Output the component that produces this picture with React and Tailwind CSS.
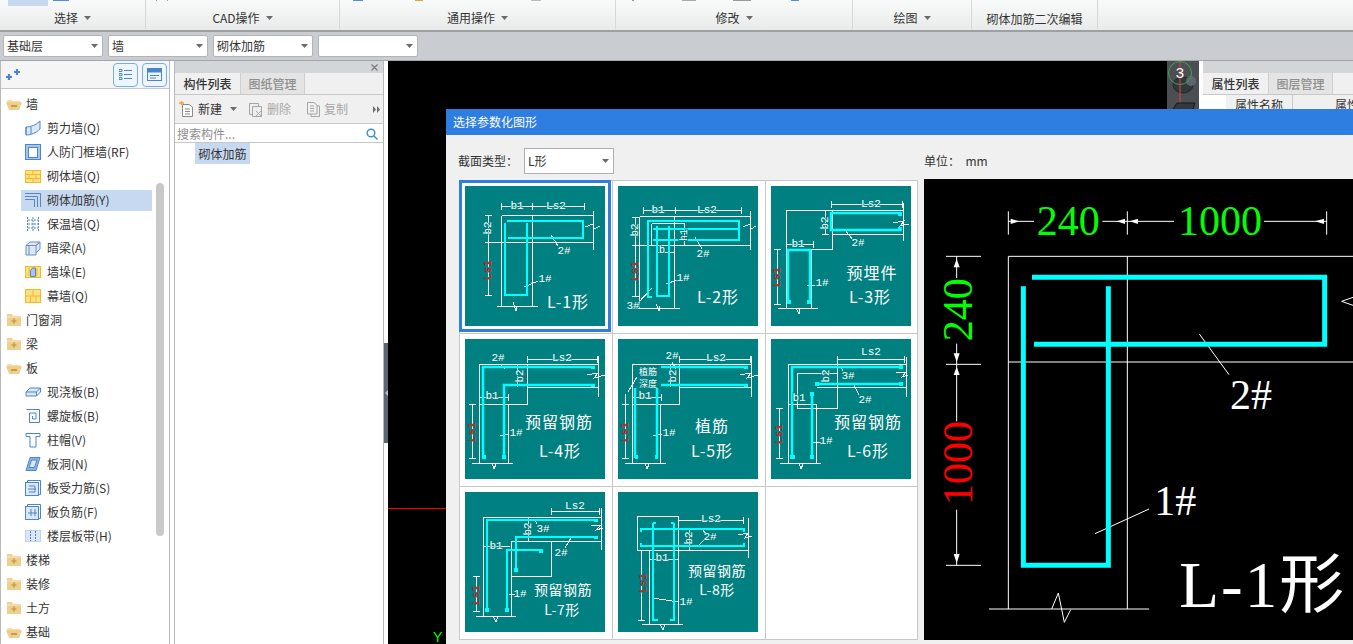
import React from "react";

const B = "#4a86d0";
const Y = "#f5b921";

function Ic({ children }) {
  return (
    <svg width="16" height="16" viewBox="0 0 16 16" fill="none" stroke={B} strokeWidth="1" className="shrink-0">
      {children}
    </svg>
  );
}

const icons = {
  shear: <Ic><path d="M1 7C6 7 11 5 15 1V9C11 13 6 15 1 15Z" fill="#dce8f7" /><path d="M1 7V15M6 7V14" /></Ic>,
  frame: <Ic><rect x="0.5" y="0.5" width="15" height="15" fill="#a9c6ea" /><rect x="3.5" y="3.5" width="9" height="10" fill="#fff" /></Ic>,
  brick: <Ic><rect x="0.5" y="2.5" width="15" height="12" fill="#fde08a" stroke={Y} /><path d="M1 6.5H15M1 10.5H15M8 3V6M4 7V10M11 7V10M8 11V14" stroke={Y} /></Ic>,
  rein: <Ic><path d="M0 1.5H15.5V15M0 4.5H12.5V15M0 7.5H9.5V15" stroke="#5b86bd" /></Ic>,
  insul: <Ic><path d="M2.5 1V15M8 1V15M13.5 1V15M3 4H13M3 8H13M3 12H13" strokeDasharray="2 1" /></Ic>,
  beam: <Ic><path d="M1 5.5L5 2H15L11 5.5ZM1 5.5H11V15H1ZM11 5.5L15 2V9L11 13" fill="#dce8f7" stroke="#6d8fb8" /><path d="M4 6V15" stroke="#6d8fb8" /></Ic>,
  pier: <Ic><rect x="0.5" y="2.5" width="15" height="11" fill="#fde08a" stroke={Y} /><path d="M4 4V12M12 4V12" stroke={Y} /><path d="M5.5 6.5L7.5 4H10.5V12.5H5.5Z" fill="#a9c6ea" /></Ic>,
  curtain: <Ic><rect x="0.5" y="1.5" width="15" height="13" fill="#fde08a" stroke={Y} /><path d="M8 2V8M1 8H15M5.5 8V14M11 8V14" stroke={Y} strokeWidth="1" /></Ic>,
  slab: <Ic><path d="M1 8L5 4H15.5L11.5 8V12H1ZM11.5 8H1M11.5 12L15.5 8V4" fill="#dce8f7" /></Ic>,
  spiral: <Ic><path d="M1.5 1.5H14.5V14.5H4.5V5H11V11H7.5V8" /></Ic>,
  cap: <Ic><path d="M1 1.5H15V4.5H11V15H5V4.5H1Z" /></Ic>,
  hole: <Ic strokeWidth="1"><path d="M5 1.5H15L11 14.5H1Z" fill="#8eb3e2" /><path d="M6.5 4H12L9.5 11.5H4Z" fill="#dce8f7" /></Ic>,
  main: <Ic><rect x="0.5" y="2.5" width="13" height="13" fill="#dce8f7" /><path d="M14 14.5H15.5V0.5H2.5V2M4 6H10V12H4M3 9H11" /></Ic>,
  neg: <Ic><rect x="0.5" y="2.5" width="13" height="13" fill="#dce8f7" /><path d="M14 14.5H15.5V0.5H2.5V2M6 5V12M10 5V12M3 9H12" /></Ic>,
  strip: <Ic><rect x="0.5" y="2.5" width="15" height="11" fill="#dce8f7" stroke="#bcd4ef" /><path d="M5.5 3V13M10.5 3V13" strokeDasharray="2 1" /></Ic>,
};

function Folder({ open }) {
  return (
    <svg width="16" height="16" viewBox="0 0 16 16" className="shrink-0">
      {open ? (
        <>
          <path d="M1 4H6L7 5H14V13H3Z" fill="#f5dca8" />
          <path d="M0 6H16L13 14H3Z" fill="#efcf8d" />
          <rect x="5" y="9" width="6" height="2" fill="#c89c4c" />
        </>
      ) : (
        <>
          <path d="M1 2H6L7 4H15V14H1Z" fill="#efcf8d" />
          <path d="M1 5H15" stroke="#f8e7c2" />
          <path d="M8 6.5V11.5M5.5 9H10.5" stroke="#c89c4c" strokeWidth="1.6" />
        </>
      )}
    </svg>
  );
}

const tree = [
  ["g", "墙", true],
  ["l", "剪力墙(Q)", "shear"],
  ["l", "人防门框墙(RF)", "frame"],
  ["l", "砌体墙(Q)", "brick"],
  ["s", "砌体加筋(Y)", "rein"],
  ["l", "保温墙(Q)", "insul"],
  ["l", "暗梁(A)", "beam"],
  ["l", "墙垛(E)", "pier"],
  ["l", "幕墙(Q)", "curtain"],
  ["g", "门窗洞", false],
  ["g", "梁", false],
  ["g", "板", true],
  ["l", "现浇板(B)", "slab"],
  ["l", "螺旋板(B)", "spiral"],
  ["l", "柱帽(V)", "cap"],
  ["l", "板洞(N)", "hole"],
  ["l", "板受力筋(S)", "main"],
  ["l", "板负筋(F)", "neg"],
  ["l", "楼层板带(H)", "strip"],
  ["g", "楼梯", false],
  ["g", "装修", false],
  ["g", "土方", false],
  ["g", "基础", true],
];

function Caret({ className = "" }) {
  return (
    <svg width="7" height="4" viewBox="0 0 7 4" className={"shrink-0 " + className}>
      <path d="M0 0H7L3.5 4Z" fill="#6b6b6b" />
    </svg>
  );
}

function RibbonGroup({ w, label, caret = true, blips = [], pad = "" }) {
  return (
    <div className="h-[29px] flex flex-col border-r border-[#d5d8da] shrink-0" style={{ width: w }}>
      <div className="h-[6px] flex items-start">
        {blips.map((b, i) => (
          <span key={i} className="shrink-0" style={{ marginLeft: b[0], width: b[1], background: b[2], height: b[3] || 1 }} />
        ))}
      </div>
      <div className={"flex-1 flex items-center justify-center gap-[6px] text-[12px] text-[#333] " + pad}>
        <span>{label}</span>
        {caret && <Caret />}
      </div>
    </div>
  );
}

function Combo({ label }) {
  return (
    <div className="w-[100px] h-[22px] bg-white border border-[#b4b4b4] rounded-[2px] flex items-center justify-between pl-[3px] pr-[4px] text-[12px] text-[#333]">
      <span>{label}</span>
      <Caret />
    </div>
  );
}

/* ---- 参数化缩略图 ---- */
function TL({ x, y, t, c = "#fff", r, s = 11, cjk, ls = 0 }) {
  return (
    <text
      x={x}
      y={y}
      fill={c}
      fontSize={s}
      letterSpacing={ls}
      textAnchor="middle"
      dominantBaseline="central"
      stroke="#008080"
      strokeWidth={cjk ? 0 : 1.5}
      paintOrder="stroke"
      className={cjk ? "font-['Noto_Sans_CJK_SC',sans-serif]" : "font-['Liberation_Mono','Noto_Sans_CJK_SC',monospace]"}
      transform={r ? `rotate(-90 ${x} ${y})` : undefined}
    >
      {t}
    </text>
  );
}

function Thumb({ white, cyan, thick = "", w = 2, texts }) {
  return (
    <svg width="140" height="140" viewBox="0 0 140 140" className="block bg-[#008080]">
      <path d={white} fill="none" stroke="#fff" strokeWidth="1" shapeRendering="crispEdges" />
      <path d={cyan} fill="none" stroke="#00ffff" strokeWidth={w} />
      {thick && <path d={thick} fill="none" stroke="#00ffff" strokeWidth="4" />}
      {texts.map((t, i) => (
        <TL key={i} {...t} />
      ))}
    </svg>
  );
}

const thumbs = [
  {
    white:
      "M36.5 20.5H119.5M36.5 17V24M67.5 17V24M119.5 17V24M36.5 29.5H128.5M36.5 29.5V120M67.5 29.5V120M22 56.5H128.5M128.5 25V64M32 120.5H73M48 116L51 125L52 120M23.5 29V109M20 29.5H27M20 56.5H27M20 109.5H27M120 41L128 38L129 43L135 40M59 101L73 95M86 49L93 60",
    cyan: "M40 37V109H62V37M42 35H118V52H43",
    texts: [
      { x: 52, y: 20, t: "b1" },
      { x: 91, y: 20, t: "Ls2" },
      { x: 23, y: 42, t: "b2", r: 1 },
      { x: 23, y: 84, t: "Ls1", r: 1, c: "#ff0000" },
      { x: 80, y: 93, t: "1#" },
      { x: 99, y: 65, t: "2#" },
      { x: 103, y: 115, t: "L-1形", s: 16, cjk: 1, ls: 1 },
    ],
  },
  {
    white:
      "M25.5 24.5H123.5M25.5 21V28M57.5 21V28M123.5 21V28M21.5 30.5H132.5M14 59.5H132.5M132.5 25V64M21.5 30.5V122M56.5 30V122M10 122.5H62M17.5 31V110M14 31.5H21M14 59.5H21M14 110.5H21M33.5 37.5V60M33.5 37.5H66M66.5 37V60M38 66.5H56M38.5 63V70M125 41L132 38L133 43L138 40M38 118L41 125L42 120M20 117L34 102M48 98L59 94M77 51L84 63",
    cyan: "M34 111H30V35H121V54H35M39 40V110H51V40M35 43H121",
    texts: [
      { x: 40, y: 24, t: "b1" },
      { x: 89, y: 24, t: "Ls2" },
      { x: 17, y: 44, t: "b2", r: 1 },
      { x: 17, y: 85, t: "Ls1", r: 1, c: "#ff0000" },
      { x: 66, y: 49, t: "h1", r: 1, s: 10 },
      { x: 44, y: 64, t: "b", s: 10 },
      { x: 65, y: 92, t: "1#" },
      { x: 85, y: 68, t: "2#" },
      { x: 15, y: 120, t: "3#" },
      { x: 100, y: 110, t: "L-2形", s: 16, cjk: 1, ls: 1 },
    ],
  },
  {
    white:
      "M60.5 18.5H131.5M60.5 15V22M131.5 15V22M15.5 24.5H131.5M15.5 24V122M61.5 24V63M15.5 63.5H61.5M40.5 63V122M61 48.5H132.5M132.5 17V55M7 122.5H47M15.5 58.5H42M42.5 55V62M54.5 24V48M51 24.5H58M51 48.5H58M6.5 63V118M3 63.5H10M3 118.5H10M122 37L133 35L129 40L138 38M25 122L28 128L29 123M36 99H44M74 44L82 54",
    cyan: "M17 117V64H39V117M130 27H60V44H130",
    w: 2.5,
    thick: "M16 116H20M40 116H36M129 26V30M129 45V41",
    texts: [
      { x: 100, y: 18, t: "Ls2" },
      { x: 27, y: 58, t: "b1" },
      { x: 54, y: 37, t: "b2", r: 1 },
      { x: 6, y: 91, t: "Ls1", r: 1, c: "#ff0000" },
      { x: 51, y: 97, t: "1#" },
      { x: 87, y: 57, t: "2#" },
      { x: 101, y: 86, t: "预埋件", s: 16, cjk: 1, ls: 1 },
      { x: 99, y: 110, t: "L-3形", s: 16, cjk: 1, ls: 1 },
    ],
  },
  {
    white:
      "M62.5 20.5H132.5M62.5 17V24M132.5 17V24M14.5 25.5H133.5M14.5 25V124M62.5 25V65M14.5 65.5H62.5M43.5 65V124M62 48.5H133.5M133.5 17V58M7 124.5H48M14.5 58.5H43M43.5 55V62M7.5 65V119M4 65.5H11M4 119.5H11M52 25V48M122 36L133 34L129 39L140 36M27 124L29 130L31 125M35 97L44 95M36 26L40 30",
    cyan: "M18 119V28H130M39 119V46H130",
    w: 2.5,
    thick: "M17 118H21M37 118H41M128 27V30M128 45V48",
    texts: [
      { x: 97, y: 19, t: "Ls2" },
      { x: 33, y: 19, t: "2#" },
      { x: 27, y: 57, t: "b1" },
      { x: 55, y: 37, t: "b2", r: 1 },
      { x: 7, y: 93, t: "Ls1", r: 1, c: "#ff0000" },
      { x: 51, y: 94, t: "1#" },
      { x: 94, y: 82, t: "预留钢筋", s: 16, cjk: 1, ls: 1 },
      { x: 95, y: 111, t: "L-4形", s: 16, cjk: 1, ls: 1 },
    ],
  },
  {
    white:
      "M61.5 20.5H132.5M61.5 17V24M132.5 17V24M14.5 25.5H133.5M14.5 25V124M61.5 25V65M14.5 65.5H61.5M42.5 65V124M61 48.5H133.5M133.5 17V58M7 124.5H48M14.5 58.5H43M43.5 55V62M7.5 55V119M4 65.5H11M4 119.5H11M52 25V48M122 36L133 34L129 39L140 36M27 124L29 130L31 125M35 97L44 95M19 38L10 53M54 23L58 30",
    cyan: "M43 28H130M43 46H130M17 49V119M39 49V119",
    w: 2.5,
    thick: "M17 118H20M37 118H40M128 27V30M128 45V48",
    texts: [
      { x: 98, y: 19, t: "Ls2" },
      { x: 54, y: 17, t: "2#" },
      { x: 30, y: 32, t: "植筋", s: 9, cjk: 1 },
      { x: 30, y: 44, t: "深度", s: 9, cjk: 1 },
      { x: 27, y: 57, t: "b1" },
      { x: 55, y: 37, t: "b2", r: 1 },
      { x: 7, y: 93, t: "Ls1", r: 1, c: "#ff0000" },
      { x: 51, y: 94, t: "1#" },
      { x: 94, y: 86, t: "植筋", s: 16, cjk: 1, ls: 1 },
      { x: 94, y: 111, t: "L-5形", s: 16, cjk: 1, ls: 1 },
    ],
  },
  {
    white:
      "M66.5 20.5H133.5M66.5 17V24M133.5 17V24M17.5 25.5H135.5M17.5 25V124M9 124.5H50M45.5 65V124M17.5 65.5H45.5M66.5 20V69.5M26 69.5H66.5M26.5 34V69M26.5 34.5H66M46 48.5H135.5M135.5 18V58M8.5 69V119M5 69.5H12M5 119.5H12M125 34L135 33L131 38L137 36M28 124L30 130L32 125M42 103H50M70 28L72 32M83 46L88 56",
    cyan: "M21 119V28H132M44 45H132M41 53V119",
    w: 2.5,
    thick: "M19 118H24M39 118H43M41 53V57M130 26V30M130 43V47M44 45H48",
    texts: [
      { x: 100, y: 13, t: "Ls2" },
      { x: 28, y: 59, t: "b1" },
      { x: 55, y: 37, t: "b2", r: 1 },
      { x: 8, y: 95, t: "Ls1", r: 1, c: "#ff0000" },
      { x: 77, y: 37, t: "3#" },
      { x: 94, y: 61, t: "2#" },
      { x: 55, y: 102, t: "1#" },
      { x: 97, y: 82, t: "预留钢筋", s: 16, cjk: 1, ls: 1 },
      { x: 97, y: 111, t: "L-6形", s: 16, cjk: 1, ls: 1 },
    ],
  },
  {
    white:
      "M86.5 19.5H134.5M86.5 16V23M134.5 16V23M18.5 25.5H136.5M18.5 25V124M11 124.5H51M46.5 49V124M46 49.5H136.5M86.5 49V84M46 84.5H86.5M136.5 16V58M11.5 84V119M8 84.5H15M8 119.5H15M63 25V50M126 34L136 33L131 38L138 36M28 124L31 130L33 124M44 102H50M106 46L100 56M18 54H45M70 28L72 32",
    cyan: "M22 118V28H133M133 45H51V79M42 118V58H77V60",
    thick: "M20 118H24M40 118H44M131 27V30M131 44V47M51 76V80M76 57V61",
    texts: [
      { x: 110, y: 14, t: "Ls2" },
      { x: 31, y: 54, t: "b1" },
      { x: 63, y: 37, t: "b2", r: 1 },
      { x: 11, y: 103, t: "Ls1", r: 1, c: "#ff0000" },
      { x: 78, y: 37, t: "3#" },
      { x: 96, y: 61, t: "2#" },
      { x: 55, y: 102, t: "1#" },
      { x: 98, y: 97, t: "预留钢筋", s: 14, cjk: 1, ls: 0.5 },
      { x: 97, y: 117, t: "L-7形", s: 14, cjk: 1, ls: 0.5 },
    ],
  },
  {
    white:
      "M19.5 24.5H60.5V58.5H19.5ZM60 28.5H125M125.5 25V32M60 58.5H130.5M130.5 26V66M31.5 58V132M60.5 58V132M24 132.5H65M42 132L45 138L47 132M31.5 67.5H60.5M23.5 58V128M20 128.5H27M71 36V58M120 43L130 41L127 46L134 44M35 106L60 110M84 37L89 43M80 54L86 48",
    cyan: "M23 40V37H126V40M23 51V54H126V51M35 31V128H40M56 31V128H52M35 31H38M56 31H53",
    texts: [
      { x: 93, y: 27, t: "Ls2" },
      { x: 44, y: 66, t: "b1" },
      { x: 71, y: 46, t: "b2", r: 1 },
      { x: 25, y: 91, t: "Ls1", r: 1, c: "#ff0000" },
      { x: 92, y: 45, t: "2#" },
      { x: 68, y: 110, t: "1#" },
      { x: 99, y: 78, t: "预留钢筋", s: 14, cjk: 1, ls: 0.5 },
      { x: 99, y: 97, t: "L-8形", s: 14, cjk: 1, ls: 0.5 },
    ],
  },
];

/* ---- 大预览 ---- */
function Preview() {
  const arrows = [
    "M297 130L272 122V138Z",
    "M590 130L615 122V138Z",
    "M629 130L654 122V138Z",
    "M1185 130L1212 122V138Z",
    "M110 243L101 268H119Z",
    "M110 552L101 526H119Z",
    "M110 566L101 591H119Z",
    "M110 1155L101 1128H119Z",
  ];
  return (
    <svg width="429" height="461" viewBox="12 3 1287 1383" className="block bg-black shrink-0 -mt-px font-['Liberation_Serif','Noto_Sans_CJK_SC',serif]">
      <path
        d="M265 130H342M547 130H622M622 130H762M1032 130H1220M265 100V170M622 100V170M1220 100V170M78 235H183M78 559H183M78 1162H183M110 235V300M110 497V559M110 559V730M110 995V1162M265 235H1299M265 235V1293M622 235V1293M265 552H1299M207 1293H687M395 1293L415 1245L433 1333L452 1295M838 468L927 590M525 1067L687 993M1299 358L1265 370L1299 382"
        fill="none"
        stroke="#fff"
        strokeWidth="3"
      />
      {arrows.map((d, i) => (
        <path key={i} d={d} fill="#fff" />
      ))}
      <path d="M310 325V1162H565V325M336 298H1214V499H342" fill="none" stroke="#00ffff" strokeWidth="15" />
      <text x="445" y="172" textAnchor="middle" fill="#00ff00" fontSize="126">240</text>
      <text x="900" y="172" textAnchor="middle" fill="#00ff00" fontSize="126">1000</text>
      <text x="155" y="395" textAnchor="middle" fill="#00ff00" fontSize="126" transform="rotate(-90 155 395)">240</text>
      <text x="155" y="855" textAnchor="middle" fill="#ff0000" fontSize="126" transform="rotate(-90 155 855)">1000</text>
      <text x="930" y="693" fill="#fff" fontSize="126">2#</text>
      <text x="703" y="1012" fill="#fff" fontSize="126">1#</text>
      <text x="778" y="1287" fill="#fff" fontSize="195" letterSpacing="6">L-1形</text>
    </svg>
  );
}

function Gizmo() {
  return (
    <svg width="32" height="48" viewBox="0 0 32 48" className="block shrink-0 bg-[#4b4e52]">
      <ellipse cx="16" cy="24" rx="10" ry="8" fill="#33383c" stroke="#22262a" />
      <circle cx="24" cy="20" r="5" fill="#5c666c" />
      <circle cx="13" cy="12" r="11.5" fill="none" stroke="#3fa24a" />
      <path d="M13 0V48" stroke="#d9454a" />
      <text x="13" y="17" textAnchor="middle" fontSize="15" fill="#fff" className="font-['Liberation_Sans',sans-serif]">3</text>
      <path d="M6 48L10 42H28L26 48" fill="#33383c" stroke="#15181a" />
    </svg>
  );
}

function SmallDoc({ dim, children }) {
  return (
    <svg width="16" height="17" viewBox="0 0 16 17" fill="none" stroke={dim ? "#a5a5a5" : "#8a8a8a"} className="shrink-0">
      {children}
    </svg>
  );
}

function Tabs({ a, b }) {
  return (
    <div className="h-[22px] flex bg-[#f0f0f0] border-b border-[#c8c8c8] shrink-0 text-[12px]">
      <div className="w-[65px] flex items-center justify-center font-medium text-[#333]">{a}</div>
      <div className="w-[65px] flex items-center justify-center bg-[#e4e4e4] text-[#8e8e8e] border-x border-[#cfcfcf] font-medium">{b}</div>
    </div>
  );
}

export default function App() {
  return (
    <div className="relative w-[1353px] h-[644px] overflow-hidden flex flex-col bg-white font-['Noto_Sans_CJK_SC','Liberation_Sans',sans-serif]">
      {/* 功能区 */}
      <div className="h-[32px] shrink-0 flex bg-gradient-to-b from-[#f9fbfb] to-[#e9ebeb] border-b-2 border-[#9da0a3]">
        <RibbonGroup w={146} label="选择" blips={[[8, 40, "#c7d9f1", 6], [5, 16, "#4a90e2"]]} />
        <RibbonGroup w={194} label="CAD操作" blips={[[10, 1, "#999"], [10, 1, "#999"]]} />
        <RibbonGroup w={276} label="通用操作" blips={[[13, 10, "#4a90e2"], [52, 8, "#e8a33d"], [108, 10, "#bbbbbb"]]} />
        <RibbonGroup w={237} label="修改" blips={[[16, 2, "#999"], [48, 14, "#aaaaaa"], [37, 18, "#999"], [40, 8, "#4a90e2"]]} />
        <RibbonGroup w={119} label="绘图" />
        <RibbonGroup w={126} label="砌体加筋二次编辑" caret={false} pad="pt-[2px]" />
      </div>

      {/* 工具条 */}
      <div className="h-[29px] shrink-0 flex items-center gap-[5px] pl-[3px] pb-[1px] bg-[#c9ccd1] border-b border-[#a2a5a9]">
        <Combo label="基础层" />
        <Combo label="墙" />
        <Combo label="砌体加筋" />
        <Combo label="" />
      </div>

      {/* 主区 */}
      <div className="flex-1 flex min-h-0">
        {/* 导航树 */}
        <div className="relative w-[170px] shrink-0 border-l border-r border-[#b7babd] flex flex-col text-[12px] text-[#333]">
          <div className="h-[28px] shrink-0 flex items-center bg-[#f5f5f5] border-b border-[#c8c8c8] pl-[5px] pr-[2px]">
            <svg width="16" height="14" viewBox="0 0 16 14" className="shrink-0">
              <path d="M0 9H6M3 6V12" stroke="#4a86d0" strokeWidth="2.2" />
              <path d="M8 4H14M11 1V7" stroke="#4a86d0" strokeWidth="2.2" />
            </svg>
            <div className="ml-auto w-[25px] h-[24px] flex items-center justify-center bg-[#eef5fd] border border-[#74afec] rounded-[4px]">
              <svg width="13" height="13" viewBox="0 0 13 13" stroke="#4a86d0" fill="none">
                <path d="M0 1.5H3V3.5H0ZM0 5.5H3V7.5H0ZM0 9.5H3V11.5H0ZM5 2.5H13M5 6.5H13M5 10.5H13" />
              </svg>
            </div>
            <div className="ml-[4px] w-[25px] h-[24px] flex items-center justify-center bg-[#eef5fd] border border-[#74afec] rounded-[4px]">
              <svg width="15" height="13" viewBox="0 0 15 13" stroke="#4a86d0" fill="none">
                <rect x="0.5" y="0.5" width="14" height="12" />
                <path d="M0 1H15V4H0Z" fill="#4a86d0" />
                <path d="M3 7.5H12M3 10H9" />
              </svg>
            </div>
          </div>
          <div className="pt-[3px] overflow-hidden">
            {tree.map(([k, t, v]) => (
              <div key={t} className="h-6 flex items-center">
                {k === "g" ? (
                  <div className="flex items-center pl-[5px] gap-[4px]">
                    <Folder open={v} />
                    <span>{t}</span>
                  </div>
                ) : (
                  <div className={"ml-[20px] w-[131px] h-[21px] flex items-center pl-[4px] gap-[6px] " + (k === "s" ? "bg-[#c7d9f1]" : "")}>
                    {icons[v]}
                    <span>{t}</span>
                  </div>
                )}
              </div>
            ))}
          </div>
          <div className="absolute left-[155px] top-[122px] w-[8px] h-[353px] bg-[#c9c9c9] rounded-[4px]" />
        </div>

        <div className="w-[4px] shrink-0 bg-white" />

        {/* 构件列表 */}
        <div className="w-[210px] shrink-0 border-l border-r border-[#b7babd] flex flex-col text-[12px] bg-white">
          <div className="h-[12px] shrink-0 bg-[#d3d5d9] flex items-center justify-end pr-[5px]">
            <svg width="7" height="7" viewBox="0 0 7 7" stroke="#7d7f82" strokeWidth="1.4"><path d="M0.5 0.5L6.5 6.5M6.5 0.5L0.5 6.5" /></svg>
          </div>
          <Tabs a="构件列表" b="图纸管理" />
          <div className="h-[29px] shrink-0 flex items-center bg-[#f0f0f0] border-b border-[#c8c8c8] pl-[4px] pr-[2px] text-[#333]">
            <SmallDoc>
              <path d="M3.5 3.5H10L13.5 6V15.5H3.5ZM6 8H11M6 10.5H11M6 13H11" fill="#fff" />
              <path d="M0 2H5M2.5 0V4" stroke="#f2a33a" strokeWidth="1.4" />
            </SmallDoc>
            <span className="ml-[3px]">新建</span>
            <Caret className="ml-[8px]" />
            <span className="ml-[11px]" />
            <SmallDoc dim>
              <path d="M1.5 2.5H10.5V13.5H1.5Z" />
              <path d="M4.5 5.5H13.5V15.5H4.5Z" fill="#eee" />
              <path d="M8 10L13 15M13 10L8 15" />
            </SmallDoc>
            <span className="ml-[3px] text-[#a8a8a8]">删除</span>
            <span className="ml-[15px]" />
            <SmallDoc dim>
              <path d="M1.5 1.5H8L11 4V13H1.5ZM4 5H8M4 7.5H8M4 10H8" />
              <path d="M11 5H13.5V15.5H5V13" />
            </SmallDoc>
            <span className="ml-[2px] text-[#a8a8a8]">复制</span>
            <svg width="7" height="7" viewBox="0 0 7 7" className="ml-auto mr-[1px]"><path d="M0 0L3 3.5L0 7ZM4 0L7 3.5L4 7Z" fill="#6b6b6b" /></svg>
          </div>
          <div className="h-[19px] shrink-0 flex items-center justify-between border-b border-[#c8c8c8] pl-[2px] pr-[5px] pt-[1px] text-[#8e8e8e]">
            <span>搜索构件...</span>
            <svg width="12" height="12" viewBox="0 0 12 12" fill="none" stroke="#3a8fd8" strokeWidth="1.4"><circle cx="5" cy="5" r="3.8" /><path d="M8 8L11.5 11.5" /></svg>
          </div>
          <div className="pl-[20px]">
            <div className="w-[55px] h-[21px] bg-[#c7d9f1] flex items-center justify-center text-[#333]">砌体加筋</div>
          </div>
        </div>

        {/* 分隔条 */}
        <div className="w-[4px] shrink-0 bg-white">
          <div className="w-[4px] h-[100px] mt-[282px] bg-[#5a6670] flex items-center justify-center">
            <svg width="3" height="6" viewBox="0 0 3 6"><path d="M3 0L0 3L3 6Z" fill="#b9bec2" /></svg>
          </div>
        </div>

        {/* 绘图区 */}
        <div className="relative flex-1 bg-black flex justify-end">
          <div className="absolute left-0 top-[447px] w-[60px] h-px bg-[#ff0000]" />
          <span className="absolute left-[45px] top-[566px] text-[14px] text-[#00ff00] font-['Liberation_Sans',sans-serif]">Y</span>
          <Gizmo />
        </div>

        {/* 属性列表 */}
        <div className="w-[154px] shrink-0 bg-white pl-[4px] flex flex-col text-[12px] overflow-hidden">
          <div className="h-[12px] shrink-0 bg-[#d3d5d9]" />
          <Tabs a="属性列表" b="图层管理" />
          <div className="h-[20px] flex text-[#333]">
            <div className="w-[23px] shrink-0 bg-white" />
            <div className="w-[67px] shrink-0 bg-[#f0f0f0] border-r border-[#c8c8c8] flex items-center justify-center whitespace-nowrap">属性名称</div>
            <div className="flex-1 bg-[#f0f0f0] flex items-center pl-[42px] whitespace-nowrap">属性值</div>
          </div>
        </div>
      </div>

      {/* 对话框 */}
      <div className="absolute left-[446px] top-[109px] w-[907px] h-[535px] bg-[#f0f0f0] flex flex-col text-[12px] text-[#333]">
        <div className="h-[26px] shrink-0 bg-[#2e7de1] flex items-center pl-[7px] text-white">选择参数化图形</div>
        <div className="h-[45px] shrink-0 flex items-center pl-[12px] pt-[7px]">
          <span className="w-[66px]">截面类型：</span>
          <div className="w-[90px] h-[26px] bg-white border border-[#b0b0b0] flex items-center justify-between pl-[3px] pr-[4px]">
            <span>L形</span>
            <Caret />
          </div>
          <span className="ml-[310px]">单位：&nbsp; mm</span>
        </div>
        <div className="flex pl-[13px] gap-[6px] items-start">
          <div className="w-[459px] h-[460px] shrink-0 bg-white border-r border-b border-[#c8c8c8] grid grid-cols-[153px_153px_152px] grid-rows-[153px_153px_153px]">
            {thumbs.map((t, i) => (
              <div key={i} className="pl-[5px] pt-[5px] border-l border-t border-[#c8c8c8]">
                <div className={i === 0 ? "outline-[3px] outline-solid outline-[#2e7de1] outline-offset-[3px] w-[140px]" : "w-[140px]"}>
                  <Thumb {...t} />
                </div>
              </div>
            ))}
            <div className="border-l border-t border-[#c8c8c8]" />
          </div>
          <Preview />
        </div>
      </div>
    </div>
  );
}
